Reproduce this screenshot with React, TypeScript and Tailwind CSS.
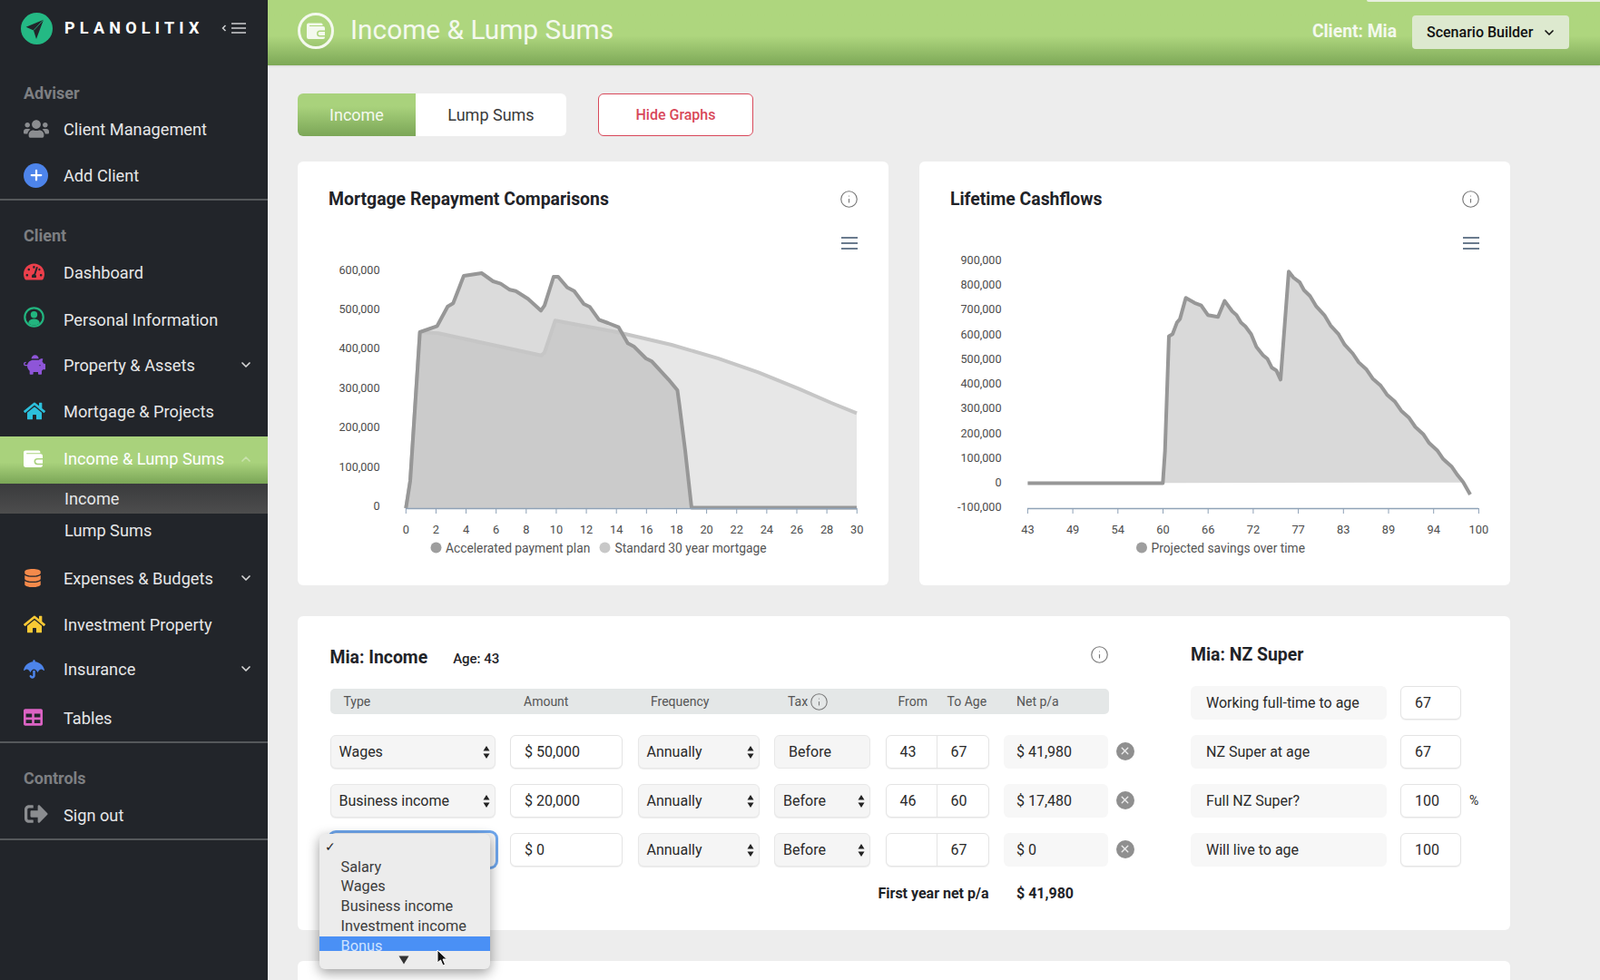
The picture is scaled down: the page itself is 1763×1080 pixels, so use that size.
import { ChevronDown, ChevronUp, Info, Plus, X } from 'lucide-react';
import {
  FaDatabase,
  FaHome,
  FaPiggyBank,
  FaSignOutAlt,
  FaTable,
  FaTachometerAlt,
  FaUmbrella,
  FaUsers,
} from 'react-icons/fa';

function WalletIcon({ size, className }: { size: number; className: string }) {
  return (
    <svg width={size} height={size * 0.9} viewBox="0 0 20 18" className={className} fill="currentColor">
      <path d="M2 0.5 H16 a1.5 1.5 0 0 1 1.5 1.5 V3 H3 V4 H18 a2 2 0 0 1 2 2 V8.5 H14.5 a3.5 3.5 0 0 0 0 7 H20 V16 a2 2 0 0 1 -2 2 H2 a2 2 0 0 1 -2 -2 V2.5 a2 2 0 0 1 2 -2 Z" />
      <path d="M14.5 10 H20 V14 H14.5 a2 2 0 0 1 0 -4 Z" />
    </svg>
  );
}

function PersonIcon() {
  return (
    <svg width="23" height="23" viewBox="0 0 23 23" className="-translate-y-[3px] text-[#22b57f]" fill="currentColor">
      <circle cx="11.5" cy="11.5" r="10.2" fill="none" stroke="currentColor" strokeWidth="2.2" />
      <circle cx="11.5" cy="8.8" r="3.7" />
      <path d="M5.2 18.2 C5.8 14.6 8.6 13.6 11.5 13.6 C14.4 13.6 17.2 14.6 17.8 18.2 A 9.6 9.6 0 0 1 5.2 18.2 Z" />
    </svg>
  );
}

function NavRow({
  icon,
  label,
  height,
  chevron,
}: {
  icon: React.ReactNode;
  label: string;
  height: string;
  chevron?: boolean;
}) {
  return (
    <div className={`flex items-center pl-[26px] pr-[16px] text-[18.2px] text-[#e6e7e8] ${height}`}>
      <span className="flex w-[44px] shrink-0 items-center">{icon}</span>
      <span className="flex-1 translate-y-[1px]">{label}</span>
      {chevron && <ChevronDown size={16} strokeWidth={2.5} className="text-[#d8d8d8]" />}
    </div>
  );
}

function SectionLabel({ children, className }: { children: string; className: string }) {
  return <div className={`flex h-[28px] items-center pl-[26px] text-[18px] font-bold text-[#7d7f82] ${className}`}>{children}</div>;
}

function Sidebar() {
  return (
    <aside className="h-[1080px] w-[295px] shrink-0 bg-[#22252a]">
      <div className="flex h-[62px] items-center pl-[23px]">
        <svg width="35" height="35" viewBox="0 0 35 35">
          <circle cx="17.5" cy="17.5" r="17.5" fill="#24b984" />
          <path d="M25 7.7 L5.7 15.7 L14 19.5 L17 29 Z" fill="#22252a" />
          <path d="M25 7.7 L14 19.5" stroke="#24b984" strokeWidth="0.8" />
        </svg>
        <span className="ml-[13px] -translate-y-[1px] text-[18px] font-bold tracking-[0.29em] text-white">PLANOLITIX</span>
        <span className="ml-[19px] flex items-center text-[#cfd0d2]">
          <svg width="28" height="14" viewBox="0 0 28 14" fill="none" stroke="currentColor">
            <path d="M4.5 4 L1.5 7 L4.5 10" strokeWidth="1.5" />
            <path d="M11 2 H27 M11 7 H27 M11 12 H27" strokeWidth="1.3" />
          </svg>
        </span>
      </div>

      <SectionLabel className="mt-[26px]">Adviser</SectionLabel>
      <NavRow height="h-[50px] mt-[1px]" label="Client Management" icon={<FaUsers size={28} className="text-[#8b8d90]" />} />
      <NavRow
        height="h-[52px]"
        label="Add Client"
        icon={
          <span className="flex h-[27px] w-[27px] items-center justify-center rounded-full bg-[#4d84ea]">
            <Plus size={18} strokeWidth={3} className="text-white" />
          </span>
        }
      />
      <div className="h-[2px] bg-[#55585b]" />

      <SectionLabel className="mt-[24px]">Client</SectionLabel>
      <NavRow height="h-[52px] mt-[1px]" label="Dashboard" icon={<FaTachometerAlt size={23} className="-translate-y-[1px] text-[#ec3f4b]" />} />
      <NavRow height="h-[52px]" label="Personal Information" icon={<PersonIcon />} />
      <NavRow height="h-[47px]" label="Property & Assets" chevron icon={<FaPiggyBank size={24} className="text-[#8e55d8]" />} />
      <NavRow height="h-[56px]" label="Mortgage & Projects" icon={<FaHome size={24} className="text-[#2cc0dc]" />} />
      <div className="flex h-[52px] items-center bg-linear-to-b from-[#a9d27c] from-55% to-[#7ba657] pb-[3px] pl-[26px] pr-[16px] text-[18.2px] text-white">
        <span className="flex w-[44px] shrink-0 items-center">
          <WalletIcon size={21} className="text-white" />
        </span>
        <span className="flex-1">Income & Lump Sums</span>
        <ChevronUp size={16} strokeWidth={2.5} className="text-[#c9e2ad]" />
      </div>
      <div className="flex h-[33px] items-center bg-linear-to-b from-[#3a3b3d] to-[#4d4d4d] pl-[71px] text-[18.2px] text-[#e6e7e8]">Income</div>
      <div className="flex h-[36px] items-center pl-[71px] pt-[1px] text-[18.2px] text-[#e6e7e8]">Lump Sums</div>
      <NavRow height="h-[69px]" label="Expenses & Budgets" chevron icon={<FaDatabase size={20} className="text-[#f58a4b]" />} />
      <NavRow height="h-[34px]" label="Investment Property" icon={<FaHome size={24} className="text-[#f8c935]" />} />
      <NavRow height="h-[64px]" label="Insurance" chevron icon={<FaUmbrella size={23} className="text-[#4d84ea]" />} />
      <NavRow height="h-[43px]" label="Tables" icon={<FaTable size={21} className="text-[#dc63c4]" />} />
      <div className="mt-[5px] h-[2px] bg-[#55585b]" />

      <SectionLabel className="mt-[24px]">Controls</SectionLabel>
      <NavRow height="h-[52px] mt-[1px]" label="Sign out" icon={<FaSignOutAlt size={26} className="translate-x-[1px] -translate-y-[1px] text-[#8b8d90]" />} />
      <div className="h-[2px] bg-[#55585b]" />
    </aside>
  );
}

type Pt = [number, number];

const toPath = (pts: Pt[]) => pts.map((p, i) => `${i === 0 ? 'M' : 'L'}${p[0].toFixed(1)} ${p[1].toFixed(1)}`).join(' ');

// series traced from the reference, in page pixels
const accelerated: Pt[] = [
  [447.3, 560], [452, 530], [462.7, 366], [481.7, 359.3], [493.3, 337.7], [499.3, 334.3], [511, 304], [530.7, 301],
  [543.3, 310], [551.7, 312.7], [561.7, 319.3], [568.3, 320.7], [581.7, 329.3], [596, 342.3], [600, 336.7], [610, 305],
  [615, 305], [625, 316.7], [632.7, 320.7], [643.3, 335], [650, 338.3], [660, 352.3], [670, 356], [681.7, 360.7],
  [691.7, 378.3], [698.3, 381.7], [711.7, 395], [718.3, 398.3], [736.7, 418.3], [746.4, 430], [748.6, 446], [755, 496.6],
  [762, 559.5], [944, 559.5],
];
const standard: Pt[] = [
  [447.3, 560], [452, 530], [462.7, 366], [483.3, 367.3], [596.7, 391.7], [600, 388.3], [611.7, 353.3], [680, 366],
  [693, 369], [740, 380], [791, 394.8], [835.7, 410.4], [880, 428.4], [916, 444], [944, 455.4],
];
const savingsStart: Pt[] = [
  [1132.4, 532.4], [1281.3, 532.4], [1283.7, 496.6], [1288, 370.4], [1292, 368.3], [1296.8, 355.6], [1300.2, 351.4],
  [1306.6, 328.3], [1316.3, 333.8], [1323.6, 336.7], [1330.9, 347.2], [1342.1, 349.3], [1349.4, 331.6], [1357.7, 343],
  [1362.5, 347.2], [1367.4, 355.6], [1372.3, 359.8], [1378.6, 368.3], [1384.4, 382.2], [1391.7, 391.4], [1396.6, 395.6],
  [1401.5, 405.3], [1406.3, 408.2], [1411, 418.3], [1420, 299.3],
];
const savingsDescent: Pt[] = [
  [1431.7, 311.7], [1443, 326.7], [1466.7, 358.3], [1490, 390], [1513, 416.7], [1536.7, 443.3], [1560, 470], [1583, 496.7],
  [1606.7, 523.3], [1611.7, 531.7],
];

// the long fall in the reference is a little stepped, not a straight line
function stepped(from: Pt, pts: Pt[]): Pt[] {
  const out: Pt[] = [];
  let prev = from;
  let flip = 1;
  for (const p of pts) {
    const n = Math.max(1, Math.round((p[0] - prev[0]) / 7));
    for (let i = 1; i <= n; i++) {
      const t = i / n;
      flip = -flip;
      out.push([prev[0] + (p[0] - prev[0]) * t + flip * 0.5, prev[1] + (p[1] - prev[1]) * t - flip * 0.5]);
    }
    prev = p;
  }
  return out;
}

function ChartMenu() {
  return <path d="M599 28 H617 M599 34 H617 M599 40 H617" stroke="#6a7b8e" strokeWidth="2" fill="none" />;
}

function MortgageChart() {
  const shift = (p: Pt): Pt => [p[0] - 328, p[1] - 234];
  const acc = accelerated.map(shift);
  const std = standard.map(shift);
  const base = 326;
  const yLabels = ['600,000', '500,000', '400,000', '300,000', '200,000', '100,000', '0'];
  const xLabels = Array.from({ length: 16 }, (_, i) => i * 2);
  return (
    <svg width="651" height="411" className="block [font-family:'Liberation_Sans',sans-serif]">
      <ChartMenu />
      <path d={`${toPath(std)} L${std[std.length - 1][0]} ${base} L${std[0][0]} ${base} Z`} fill="#b5b5b5" fillOpacity="0.32" />
      <path d={`${toPath(acc)} Z`} fill="#9a9a9a" fillOpacity="0.36" />
      <path d={toPath(std)} fill="none" stroke="#c6c6c6" strokeWidth="4" strokeLinejoin="round" />
      <path d={toPath(acc)} fill="none" stroke="#979797" strokeWidth="4" strokeLinejoin="round" />
      <path d={`M119 326.5 H616`} stroke="#8fa2b7" strokeWidth="1.5" />
      {xLabels.map((v, i) => (
        <g key={v}>
          <path d={`M${119.3 + i * 33.13} 326 V332`} stroke="#8fa2b7" strokeWidth="1" />
          <text x={119.3 + i * 33.13} y={354} textAnchor="middle" fontSize="12.8" fill="#4c4c4c">{v}</text>
        </g>
      ))}
      {yLabels.map((v, i) => (
        <text key={v} x="90.5" y={67.5 + i * 43.43} textAnchor="end" fontSize="12.6" fill="#4c4c4c">{v}</text>
      ))}
      <circle cx="152.5" cy="369.5" r="6" fill="#9e9e9e" />
      <text x="163" y="374.5" fontSize="13.8" fill="#555555">Accelerated payment plan</text>
      <circle cx="338.5" cy="369.5" r="6" fill="#c8c8c8" />
      <text x="349.5" y="374.5" fontSize="13.8" fill="#555555">Standard 30 year mortgage</text>
    </svg>
  );
}

function CashflowChart() {
  const shift = (p: Pt): Pt => [p[0] - 1013, p[1] - 234];
  const last = savingsStart[savingsStart.length - 1];
  const all: Pt[] = [...savingsStart, ...stepped(last, savingsDescent)];
  const fillPts = all.map(shift);
  const line = [...fillPts, shift([1620, 545])];
  const zero = 297.7;
  const yLabels = ['900,000', '800,000', '700,000', '600,000', '500,000', '400,000', '300,000', '200,000', '100,000', '0', '-100,000'];
  const xLabels = [43, 49, 54, 60, 66, 72, 77, 83, 89, 94, 100];
  return (
    <svg width="651" height="411" className="block [font-family:'Liberation_Sans',sans-serif]">
      <ChartMenu />
      <path d={`${toPath(fillPts)} L${fillPts[fillPts.length - 1][0]} ${zero} Z`} fill="#d9d9d9" />
      <path d={toPath(line)} fill="none" stroke="#979797" strokeWidth="4" strokeLinejoin="round" />
      <path d="M119 326.5 H616" stroke="#8fa2b7" strokeWidth="1.5" />
      {xLabels.map((v, i) => (
        <g key={v}>
          <path d={`M${119.4 + i * 49.7} 326 V332`} stroke="#8fa2b7" strokeWidth="1" />
          <text x={119.4 + i * 49.7} y={354} textAnchor="middle" fontSize="12.8" fill="#4c4c4c">{v}</text>
        </g>
      ))}
      {yLabels.map((v, i) => (
        <text key={v} x="90.5" y={57 + i * 27.22} textAnchor="end" fontSize="12.6" fill="#4c4c4c">{v}</text>
      ))}
      <circle cx="245" cy="369.5" r="6" fill="#9e9e9e" />
      <text x="255.5" y="374.5" fontSize="13.8" fill="#555555">Projected savings over time</text>
    </svg>
  );
}

function ChartCard({ title, children }: { title: string; children: React.ReactNode }) {
  return (
    <div className="h-[467px] w-[651px] rounded-md bg-white">
      <div className="flex h-[56px] items-end justify-between pl-[34px] pr-[33px]">
        <h2 className="flex h-[30px] items-center pt-[2px] text-[19.4px] font-bold text-[#1f2328]">{title}</h2>
        <span className="flex h-[30px] items-center">
          <Info size={21} strokeWidth={1.3} className="text-[#777777]" />
        </span>
      </div>
      {children}
    </div>
  );
}

function UpDown() {
  return (
    <svg width="8" height="16" viewBox="0 0 8 16" className="shrink-0">
      <path d="M4 1 L7.5 6.5 H0.5 Z M4 15 L0.5 9.5 H7.5 Z" fill="#222222" />
    </svg>
  );
}

function SelectBox({ value, className }: { value: string; className?: string }) {
  return (
    <div className={`flex h-[37px] items-center justify-between rounded-md border border-[#e8e8e8] bg-[#f5f5f5] pl-[9px] pr-[5px] text-[16px] text-[#2a2a2a] shadow-[0_1px_1px_rgba(0,0,0,0.08)] ${className ?? ''}`}>
      <span>{value}</span>
      <UpDown />
    </div>
  );
}

function InputBox({ value, className }: { value: string; className?: string }) {
  return (
    <div className={`flex h-[37px] items-center rounded-md border border-[#e4e4e4] bg-white pl-[15px] text-[16px] text-[#2a2a2a] shadow-[0_1px_1px_rgba(0,0,0,0.06)] ${className ?? ''}`}>
      {value}
    </div>
  );
}

function AgePair({ from, to }: { from: string; to: string }) {
  return (
    <div className="flex h-[37px] rounded-md border border-[#e4e4e4] bg-white text-[16px] text-[#2a2a2a] shadow-[0_1px_1px_rgba(0,0,0,0.06)]">
      <span className="flex w-[56px] items-center border-r border-[#e4e4e4] pl-[15px]">{from}</span>
      <span className="flex flex-1 items-center pl-[15px]">{to}</span>
    </div>
  );
}

function NetBox({ value }: { value: string }) {
  return <div className="flex h-[37px] items-center rounded-md bg-[#f7f7f7] pl-[14px] text-[16px] text-[#2a2a2a]">{value}</div>;
}

function RemoveButton() {
  return (
    <span className="ml-[8px] flex h-[20px] w-[20px] -translate-y-[1px] items-center justify-center rounded-full bg-[#8f8f8f]">
      <X size={13} strokeWidth={2.6} className="text-[#ececec]" />
    </span>
  );
}

const grid = 'grid w-[858px] grid-cols-[182px_124px_134px_106px_114px_115px] gap-x-[16.5px]';

function TypeDropdown() {
  return (
    <div className="absolute left-[-12px] top-[1px] z-10 h-[149px] w-[188px] rounded-md bg-[#ececec] pt-[4px] [font-family:'Liberation_Sans',sans-serif] text-[16.3px] leading-[21.7px] text-[#3d3d3d] shadow-[0_4px_14px_rgba(0,0,0,0.4)]">
      <div className="h-[21.7px] pl-[6px] text-[14px] text-[#222222]">✓</div>
      <div className="pl-[24px]">Salary</div>
      <div className="pl-[24px]">Wages</div>
      <div className="pl-[24px]">Business income</div>
      <div className="pl-[24px]">Investment income</div>
      <div className="h-[16px] overflow-hidden bg-[#4a90f5] pl-[24px] leading-[21px] text-[#cfe3ff]">Bonus</div>
      <div className="flex h-[21px] items-center pl-[87px]">
        <svg width="12" height="10" viewBox="0 0 12 10">
          <path d="M0.5 0.5 H11.5 L6 9.5 Z" fill="#333333" />
        </svg>
      </div>
      <svg width="13" height="20" viewBox="0 0 13 20" className="absolute left-[129px] top-[127px]">
        <path d="M1 1 V15 L4.5 12 L7 18 L9.5 17 L7 11 H11.5 Z" fill="#111111" stroke="#ffffff" strokeWidth="1" />
      </svg>
    </div>
  );
}

const superRows = [
  { label: 'Working full-time to age', value: '67' },
  { label: 'NZ Super at age', value: '67' },
  { label: 'Full NZ Super?', value: '100', suffix: '%' },
  { label: 'Will live to age', value: '100' },
];

function IncomeCard() {
  return (
    <div className="mt-[34px] flex h-[346px] w-[1336px] rounded-md bg-white pl-[35.5px]">
      <div className="w-[887px] pt-[30px]">
        <div className="flex h-[30px] w-[858px] items-center justify-between">
          <div className="flex items-center">
            <h2 className="translate-y-[1px] text-[19.4px] font-bold text-[#1f2328]">Mia: Income</h2>
            <span className="ml-[28px] translate-y-[2px] text-[15px] font-medium text-[#1f2328]">Age: 43</span>
          </div>
          <Info size={21} strokeWidth={1.3} className="-translate-y-[3px] text-[#777777]" />
        </div>
        <div className={`${grid} mt-[20px] h-[28px] items-center rounded-[5px] bg-[#e4e7e7] text-[14px] text-[#555555]`}>
          <span className="pl-[15px]">Type</span>
          <span className="pl-[15px]">Amount</span>
          <span className="pl-[14.5px]">Frequency</span>
          <span className="flex items-center gap-[2px] pl-[15px]">
            Tax <Info size={21} strokeWidth={1.2} className="text-[#777777]" />
          </span>
          <span className="flex pl-[14px]">
            <span className="w-[54px]">From</span>
            <span>To Age</span>
          </span>
          <span className="pl-[14px]">Net p/a</span>
        </div>

        <div className="mt-[23px] flex flex-col gap-[17px]">
          <div className="flex items-center">
            <div className={grid}>
              <SelectBox value="Wages" />
              <InputBox value="$ 50,000" />
              <SelectBox value="Annually" />
              <div className="flex h-[37px] items-center rounded-md border border-[#e8e8e8] bg-[#f5f5f5] pl-[15px] text-[16px] text-[#2a2a2a]">Before</div>
              <AgePair from="43" to="67" />
              <NetBox value="$ 41,980" />
            </div>
            <RemoveButton />
          </div>
          <div className="flex items-center">
            <div className={grid}>
              <SelectBox value="Business income" />
              <InputBox value="$ 20,000" />
              <SelectBox value="Annually" />
              <SelectBox value="Before" />
              <AgePair from="46" to="60" />
              <NetBox value="$ 17,480" />
            </div>
            <RemoveButton />
          </div>
          <div className="flex items-center">
            <div className={grid}>
              <div className="relative h-[37px] rounded-md bg-[#f5f5f5] ring-[3px] ring-[#6ea6ec]">
                <TypeDropdown />
              </div>
              <InputBox value="$ 0" />
              <SelectBox value="Annually" />
              <SelectBox value="Before" />
              <AgePair from="" to="67" />
              <NetBox value="$ 0" />
            </div>
            <RemoveButton />
          </div>
        </div>

        <div className={`${grid} mt-[15.4px] h-[30px] items-center text-[16px] font-bold text-[#1f2328]`}>
          <span className="col-span-5 text-right">First year net p/a</span>
          <span className="pl-[14px]">$ 41,980</span>
        </div>
      </div>

      <div className="ml-[61.5px] pt-[27px]">
        <h2 className="flex h-[30px] items-center pt-[2px] text-[19.4px] font-bold text-[#1f2328]">Mia: NZ Super</h2>
        <div className="mt-[20px] flex flex-col gap-[17px]">
          {superRows.map((row) => (
            <div key={row.label} className="flex items-center">
              <div className="flex h-[37px] w-[216px] items-center rounded-md bg-[#f7f7f7] pl-[17px] text-[16px] text-[#2a2a2a]">{row.label}</div>
              <InputBox value={row.value} className="ml-[15px] w-[67px]" />
              {row.suffix && <span className="ml-[9px] text-[14px] text-[#2a2a2a]">{row.suffix}</span>}
            </div>
          ))}
        </div>
      </div>
    </div>
  );
}

export default function App() {
  return (
    <div className="flex h-[1080px] w-[1763px] overflow-hidden bg-[#ededed] [font-family:Roboto,sans-serif]">
      <Sidebar />
      <main className="min-w-0 flex-1">
        <header className="relative flex h-[72px] items-start justify-between bg-linear-to-b from-[#aed67e] from-55% to-[#7da857] pl-[33px] pr-[34px] shadow-[0_1px_2px_rgba(0,0,0,0.1)]">
          <div className="flex h-[67px] items-center">
            <span className="flex h-[40px] w-[40px] items-center justify-center rounded-full border-[3px] border-[#f4f9ee]">
              <WalletIcon size={20} className="text-[#f4f9ee]" />
            </span>
            <h1 className="ml-[18px] text-[29.8px] text-[#f4f9ee]">Income & Lump Sums</h1>
          </div>
          <div className="flex h-[71px] items-center">
            <span className="text-[19.3px] font-bold text-[#f4f9ee]">Client: Mia</span>
            <button className="ml-[17px] flex h-[37px] w-[173px] items-center justify-between rounded bg-[#dde9cf] pl-[16px] pr-[14px] text-[16px] font-medium text-[#111111]">
              Scenario Builder
              <ChevronDown size={16} strokeWidth={2.5} />
            </button>
          </div>
          <span className="absolute right-0 top-0 h-[2px] w-[257px] rounded-bl bg-[#e8efe0]" />
        </header>

        <div className="pl-[33px] pt-[31px]">
          <div className="flex items-center">
            <div className="flex h-[47px] overflow-hidden rounded-md text-[18px]">
              <span className="flex w-[130px] items-center justify-center bg-linear-to-b from-[#a9d27c] from-30% to-[#7ba657] text-[#f4f9ee]">Income</span>
              <span className="flex w-[166px] items-center justify-center bg-white text-[#3a3a3a]">Lump Sums</span>
            </div>
            <button className="ml-[35px] h-[47px] w-[171px] rounded-md border border-[#d8485a] bg-white text-[16px] font-medium text-[#d8485a]">Hide Graphs</button>
          </div>

          <div className="mt-[28px] flex gap-[34px]">
            <ChartCard title="Mortgage Repayment Comparisons">
              <MortgageChart />
            </ChartCard>
            <ChartCard title="Lifetime Cashflows">
              <CashflowChart />
            </ChartCard>
          </div>

          <IncomeCard />

          <div className="mt-[34px] h-[80px] w-[1336px] rounded-md bg-white" />
        </div>
      </main>
    </div>
  );
}
